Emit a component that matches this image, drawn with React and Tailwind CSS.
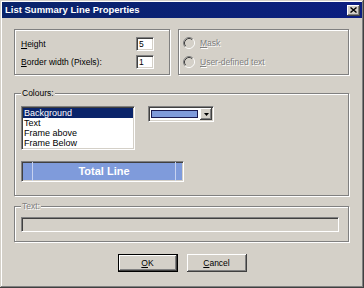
import React from "react";

const sunken =
  "border border-t-[#808080] border-l-[#808080] border-b-white border-r-white shadow-[inset_1px_1px_#404040,inset_-1px_-1px_#d4d0c8]";
const raised =
  "shadow-[inset_-1px_-1px_#404040,inset_1px_1px_#fff,inset_-2px_-2px_#808080,inset_2px_2px_#d4d0c8]";
const etched = "border border-[#808080] shadow-[inset_1px_1px_#fff,1px_1px_#fff]";
const disabledText = "text-[#808080] [text-shadow:1px_1px_0_#fff]";

const Radio = () => (
  <svg width="12" height="12" viewBox="0 0 12 12">
    <circle cx="6" cy="6" r="4.5" fill="#d4d0c8" />
    <path d="M2.11 9.89 A5.5 5.5 0 0 1 9.89 2.11" stroke="#808080" fill="none" />
    <path d="M9.89 2.11 A5.5 5.5 0 0 1 2.11 9.89" stroke="#fff" fill="none" />
    <path d="M2.82 9.18 A4.5 4.5 0 0 1 9.18 2.82" stroke="#404040" fill="none" />
    <path d="M9.18 2.82 A4.5 4.5 0 0 1 2.82 9.18" stroke="#d4d0c8" fill="none" />
  </svg>
);

const GroupLabel = ({ children, disabled }) => (
  <span
    className={`absolute left-[6px] top-[-7px] bg-[#d4d0c8] px-[1px] leading-[12px] ${
      disabled ? disabledText : "text-black"
    }`}
  >
    {children}
  </span>
);

export default function App() {
  const items = ["Background", "Text", "Frame above", "Frame Below"];

  return (
    <div
      className={`w-[364px] h-[288px] bg-[#d4d0c8] p-[2px] flex flex-col text-[8.5px] text-black font-['Liberation_Sans',Arial,sans-serif] shadow-[inset_-1px_-1px_#404040,inset_1px_1px_#d4d0c8,inset_-2px_-2px_#808080,inset_2px_2px_#fff]`}
    >
      {/* Title bar */}
      <div className="h-[16px] flex items-center justify-between pl-[3px] pr-[2px] bg-gradient-to-r from-[#0a246a] to-[#0c1e80]">
        <span className="text-white font-bold text-[9.5px] leading-none">
          List Summary Line Properties
        </span>
        <div className={`w-[13px] h-[11px] bg-[#d4d0c8] flex items-center justify-center ${raised}`}>
          <svg width="7" height="6" viewBox="0 0 7 6">
            <path d="M0.5 0.5 L6.5 5.5 M6.5 0.5 L0.5 5.5" stroke="#000" strokeWidth="1.4" />
          </svg>
        </div>
      </div>

      <div className="flex flex-col px-[12px] pt-[11px]">
        {/* Top row */}
        <div className="flex gap-[8px]">
          <div className={`w-[156px] h-[46px] pt-[7px] pl-[6px] flex flex-col gap-[4px] ${etched}`}>
            <div className="flex items-center h-[14px]">
              <span className="w-[115px]">
                <u>H</u>eight
              </span>
              <div className={`w-[18px] h-[14px] bg-white pl-[2px] leading-[12px] ${sunken}`}>5</div>
            </div>
            <div className="flex items-center h-[14px]">
              <span className="w-[115px]">
                <u>B</u>order width (Pixels):
              </span>
              <div className={`w-[18px] h-[14px] bg-white pl-[2px] leading-[12px] ${sunken}`}>1</div>
            </div>
          </div>

          <div className={`w-[171px] h-[46px] pt-[6px] pl-[4px] flex flex-col gap-[5px] ${etched}`}>
            <div className="flex items-center gap-[5px] h-[14px]">
              <Radio />
              <span className={disabledText}>
                <u>M</u>ask
              </span>
            </div>
            <div className="flex items-center gap-[5px] h-[14px]">
              <Radio />
              <span className={disabledText}>
                <u>U</u>ser-defined text
              </span>
            </div>
          </div>
        </div>

        {/* Colours */}
        <div className={`relative mt-[18px] w-[335px] h-[103px] pl-[6px] pt-[12px] ${etched}`}>
          <GroupLabel>Colours:</GroupLabel>
          <div className="flex items-start">
            <div className={`w-[114px] h-[44px] bg-white p-[1px] ${sunken}`}>
              {items.map((item, i) => (
                <div
                  key={item}
                  className={`h-[10px] leading-[10px] pl-[1px] text-[9px] ${
                    i === 0 ? "bg-[#0a246a] text-white" : ""
                  }`}
                >
                  {item}
                </div>
              ))}
            </div>
            <div className={`ml-[13px] w-[66px] h-[16px] bg-white flex items-center ${sunken}`}>
              <div className="ml-[2px] w-[47px] h-[8px] border border-[#1a1a50] bg-[#7f9bdb]" />
              <div className={`ml-auto mr-[1px] w-[12px] h-[12px] bg-[#d4d0c8] flex items-center justify-center ${raised}`}>
                <svg width="5" height="3" viewBox="0 0 5 3">
                  <path d="M0 0 H5 L2.5 3 Z" fill="#000" />
                </svg>
              </div>
            </div>
          </div>
          <div className={`mt-[11px] w-[163px] h-[21px] flex bg-[#7f9bdb] ${sunken}`}>
            <div className="w-[10px]" />
            <div className="w-[1px] bg-[#c7d2f0]" />
            <div className="flex-1 flex items-center justify-center text-white font-bold text-[11px]">
              Total Line
            </div>
            <div className="w-[1px] bg-[#c7d2f0]" />
            <div className="w-[7px]" />
          </div>
        </div>

        {/* Text */}
        <div className={`relative mt-[10px] w-[335px] h-[36px] pl-[6px] pt-[10px] ${etched}`}>
          <GroupLabel disabled>Text:</GroupLabel>
          <div className={`w-[318px] h-[15px] bg-[#d4d0c8] ${sunken}`} />
        </div>

        {/* Buttons */}
        <div className="flex justify-center gap-[9px] mt-[12px]">
          <div className="w-[60px] h-[18px] border border-black bg-[#d4d0c8]">
            <div className={`w-full h-full flex items-center justify-center ${raised}`}>
              <span>
                <u>O</u>K
              </span>
            </div>
          </div>
          <div className={`w-[60px] h-[18px] bg-[#d4d0c8] flex items-center justify-center ${raised}`}>
            <span>
              <u>C</u>ancel
            </span>
          </div>
        </div>
      </div>
    </div>
  );
}
